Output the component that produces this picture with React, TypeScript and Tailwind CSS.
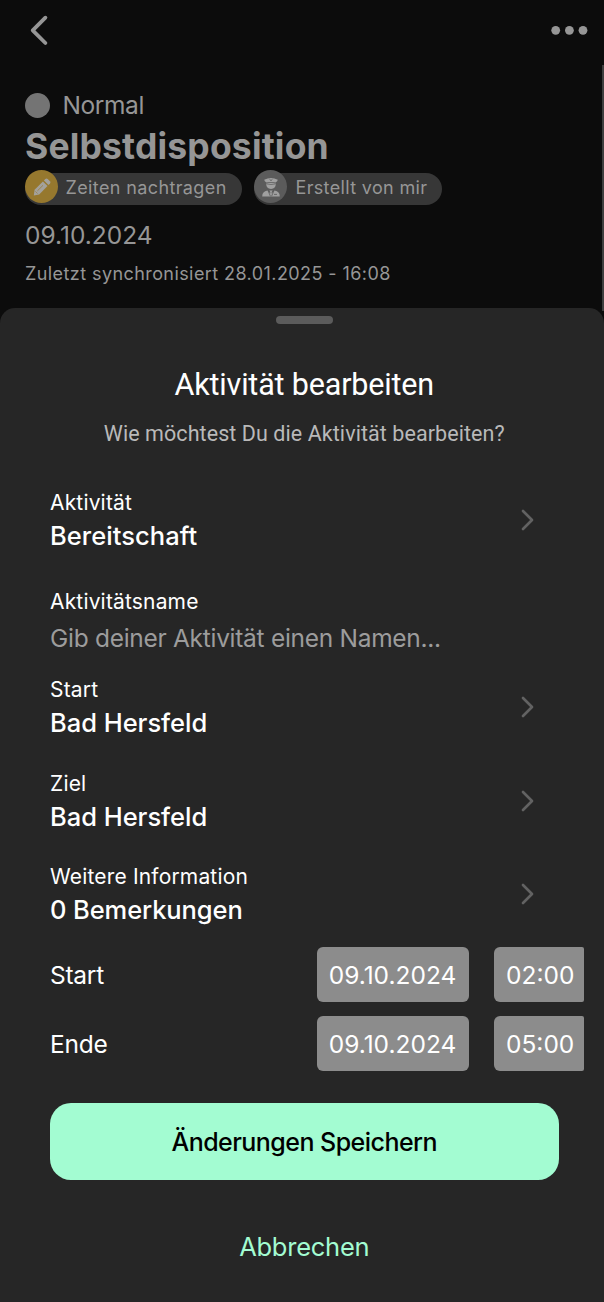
import React from 'react';

function Chevron() {
  return (
    <svg width="14" height="22" viewBox="0 0 14 22" fill="none" className="shrink-0">
      <path d="M2 2 L11 11 L2 20" stroke="#626262" strokeWidth="2.7" strokeLinecap="round" strokeLinejoin="round" />
    </svg>
  );
}

function Pencil() {
  return (
    <svg width="20" height="20" viewBox="0 0 20 20" fill="#a3a19c">
      <path d="M2.6 12.8 L10.9 4.5 L15.5 9.1 L7.2 17.4 L1.8 18.4 Z" />
      <path d="M11.9 3.5 L13.3 2.1 Q14.5 1 15.7 2.1 L17.9 4.3 Q19 5.5 17.9 6.7 L16.5 8.1 Z" />
      <path d="M5.4 13.9 L11 8.3" stroke="#96782e" strokeWidth="0.7" />
      <path d="M3.4 14.4 L5.6 16.6" stroke="#96782e" strokeWidth="0.6" />
    </svg>
  );
}

function Officer() {
  return (
    <svg width="20" height="20" viewBox="0 0 20 20" fill="#a0a0a0">
      <path d="M3.2 2.8 Q10 -0.9 16.8 2.8 Q16.6 4.6 14.6 5.6 Q10 4.3 5.4 5.6 Q3.4 4.6 3.2 2.8 Z" />
      <path d="M5.2 6.6 Q10 5 14.8 6.6 Q14.8 11.9 10 11.9 Q5.2 11.9 5.2 6.6 Z" />
      <path d="M8.6 2.4 L10 3.6 L11.4 2.4" stroke="#5b5b5b" strokeWidth="0.9" fill="none" />
      <path d="M5.6 6.9 Q10 8.2 14.4 6.9" stroke="#5b5b5b" strokeWidth="0.7" fill="none" />
      <path d="M1.2 19.5 Q1.2 14.4 6.4 13.6 L10 17.2 L13.6 13.6 Q18.8 14.4 18.8 19.5 Z" />
      <path d="M8.3 13.4 H11.7 L10.6 15 L11 18 H9 L9.4 15 Z" />
      <path d="M7.2 14 L9.4 19.2 M12.8 14 L10.6 19.2 M13 17.4 H16" stroke="#5b5b5b" strokeWidth="0.8" />
    </svg>
  );
}

function Chip({ icon, tone, width, textClass, children }: { icon: React.ReactNode; tone: string; width: string; textClass: string; children: React.ReactNode }) {
  return (
    <div className={`flex h-[32px] rounded-full bg-[#373737] ${width}`}>
      <span className={`-mt-[3px] flex size-[33px] shrink-0 items-center justify-center rounded-full ${tone}`}>{icon}</span>
      <span className={`text-[18px] leading-[29px] whitespace-nowrap ${textClass}`}>{children}</span>
    </div>
  );
}

function Field({ label, value, spacing, className }: { label: string; value: string; spacing: string; className: string }) {
  return (
    <div className={`flex justify-between pr-[24px] ${className}`}>
      <div>
        <div className="h-[29px] text-[21px] leading-[28px] tracking-[0.17px]">{label}</div>
        <div className={`h-[35px] text-[25.5px] leading-[36px] font-medium ${spacing}`}>{value}</div>
      </div>
      <div className="pt-[20px]">
        <Chevron />
      </div>
    </div>
  );
}

function DateRow({ label, time, className }: { label: string; time: string; className: string }) {
  return (
    <div className={`-mr-[25px] flex h-[55px] text-[24.5px] leading-[57px] ${className}`}>
      <span className="flex-1 tracking-[-0.25px]">{label}</span>
      <span className="mr-[25px] h-[55px] w-[152px] rounded-[6px] bg-[#8c8c8c] text-center">09.10.2024</span>
      <span className="h-[55px] w-[90px] rounded-l-[6px] rounded-r-[2px] bg-[#8c8c8c] pl-[12.5px]">{time}</span>
    </div>
  );
}

export default function App() {
  return (
    <div className="h-[1302px] w-[604px] overflow-hidden bg-[#0c0c0c] font-['Inter',sans-serif] text-[#969696]">
      <header className="flex h-[65px] items-start justify-between pt-[15px] pr-[15px] pl-[29px]">
        <svg width="20" height="31" viewBox="0 0 20 31" fill="none">
          <path d="M16.4 2.7 L3.7 15.3 L16.4 28" stroke="#969696" strokeWidth="3.8" strokeLinecap="round" strokeLinejoin="round" />
        </svg>
        <svg width="38" height="31" viewBox="0 0 38 31" fill="#969696">
          <circle cx="4.7" cy="15.3" r="4.4" />
          <circle cx="18.4" cy="15.3" r="4.4" />
          <circle cx="32" cy="15.3" r="4.4" />
        </svg>
      </header>

      <div className="flex h-[243px] justify-between">
        <section className="pt-[24px] pl-[25px]">
          <div className="flex h-[32px] items-center text-[24.5px] leading-[32px] tracking-[-0.4px]">
            <span className="mr-[12.5px] size-[25px] rounded-full bg-[#747474]" />
            Normal
          </div>
          <h1 className="mt-[4px] text-[35.5px] leading-[44px] font-bold tracking-[0.17px]">Selbstdisposition</h1>
          <div className="mt-[4px] flex gap-[12px]">
            <Chip icon={<Pencil />} tone="bg-[#96782e]" width="w-[217px]" textClass="ml-[7.5px] tracking-[0.38px]">Zeiten nachtragen</Chip>
            <Chip icon={<Officer />} tone="bg-[#5b5b5b]" width="w-[188px]" textClass="ml-[8.5px] tracking-[0.34px]">Erstellt von mir</Chip>
          </div>
          <div className="mt-[14px] text-[24.5px] leading-[32px]">09.10.2024</div>
          <div className="mt-[11px] text-[18px] leading-[24px] tracking-[0.42px]">Zuletzt synchronisiert 28.01.2025 - 16:08</div>
        </section>
        <div className="-mb-[3px] w-[2px] bg-[#3e3e3e]" />
      </div>

      <main className="relative h-[994px] rounded-t-[15px] bg-[#262626] pr-[45.5px] pl-[50px] pt-[8px] text-white">
        <div className="mx-auto h-[8px] w-[57px] rounded-full bg-[#5b5b5b]" />
        <h2 className="mt-[41px] text-center font-['Roboto',sans-serif] text-[30.5px] leading-[40px] tracking-[-0.17px]">Aktivität bearbeiten</h2>
        <p className="mt-[15px] text-center font-['Roboto',sans-serif] text-[21.5px] leading-[28px] tracking-[0.07px] text-[#b9b9b9]">Wie möchtest Du die Aktivität bearbeiten?</p>

        <Field className="mt-[41px]" label="Aktivität" value="Bereitschaft" spacing="tracking-[0.05px]" />
        <div className="mt-[35px] text-[21px] leading-[28px] tracking-[0.17px]">Aktivitätsname</div>
        <div className="mt-[4px] text-[24.5px] leading-[36px] tracking-[-0.29px] text-[#9c9c9c]">Gib deiner Aktivität einen Namen...</div>
        <Field className="mt-[20px]" label="Start" value="Bad Hersfeld" spacing="tracking-[-0.03px]" />
        <Field className="mt-[30px]" label="Ziel" value="Bad Hersfeld" spacing="tracking-[-0.03px]" />
        <Field className="mt-[29px]" label="Weitere Information" value="0 Bemerkungen" spacing="tracking-[-0.1px]" />

        <DateRow className="mt-[20px]" label="Start" time="02:00" />
        <DateRow className="mt-[14px]" label="Ende" time="05:00" />

        <button className="mt-[32px] block h-[77px] w-full rounded-[21px] bg-[#a3fcd2] pt-[2px] text-[25px] leading-[75px] font-medium tracking-[-0.54px] text-black">Änderungen Speichern</button>
        <button className="mt-[49px] block h-[36px] w-full text-[25.5px] leading-[36px] tracking-[-0.25px] text-[#a3fcd2]">Abbrechen</button>
      </main>
    </div>
  );
}
